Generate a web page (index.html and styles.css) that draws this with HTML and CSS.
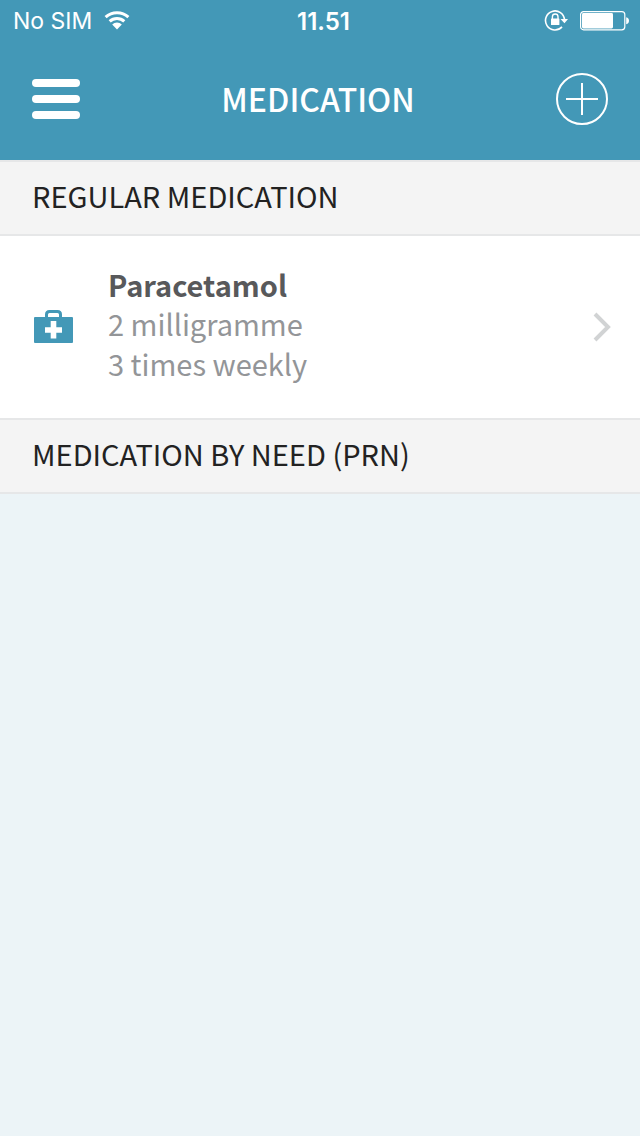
FILE: index.html
```html
<!DOCTYPE html>
<html lang="en">
<head>
<meta charset="utf-8">
<meta name="viewport" content="width=device-width, initial-scale=1">
<title>Medication</title>
<link rel="stylesheet" href="styles.css">
</head>
<body>
<header class="top">
  <div class="status">
    <div class="status-left">
      <span>No SIM</span>
      <svg width="26" height="20" viewBox="0 0 26 20" fill="none" stroke="#fff" stroke-width="3" aria-hidden="true">
        <path d="M1.6 6.2A16.5 16.5 0 0 1 24.4 6.2"/>
        <path d="M5.7 10.4A10.6 10.6 0 0 1 20.3 10.4"/>
        <path d="M13 18.4L8.2 13.6A6.8 6.8 0 0 1 17.8 13.6Z" fill="#fff" stroke="none"/>
      </svg>
    </div>
    <time class="clock">11.51</time>
    <div class="status-right">
      <svg width="24" height="22" viewBox="0 0 24 22" aria-hidden="true">
        <path d="M18 16.9A9.5 9.5 0 1 1 20.5 10" fill="none" stroke="#fff" stroke-width="1.6"/>
        <path d="M16.5 9H24L20.5 13.3Z" fill="#fff"/>
        <rect x="7" y="8.5" width="8.4" height="6.5" rx=".6" fill="#fff"/>
        <path d="M8.4 9V6.8A2.8 2.8 0 0 1 14 6.8V9" fill="none" stroke="#fff" stroke-width="1.4"/>
      </svg>
      <svg width="50" height="20" viewBox="0 0 50 20" aria-hidden="true">
        <rect x=".6" y=".6" width="44.2" height="18.2" rx="3" fill="none" stroke="#fff" stroke-width="1.2"/>
        <rect x="2" y="2" width="31" height="15.4" rx="1.4" fill="#fff"/>
        <path d="M46.2 6.2Q49 6.8 49 9.7T46.2 13.2Z" fill="#fff"/>
      </svg>
    </div>
  </div>
  <nav class="bar">
    <button class="icon-button" type="button" aria-label="Menu">
      <svg width="48" height="40" viewBox="0 0 48 40" fill="#fff" aria-hidden="true">
        <rect width="48" height="8" rx="4"/>
        <rect y="16" width="48" height="8" rx="4"/>
        <rect y="32" width="48" height="8" rx="4"/>
      </svg>
    </button>
    <h1 class="title">MEDICATION</h1>
    <button class="icon-button" type="button" aria-label="Add medication">
      <svg width="52" height="52" viewBox="0 0 52 52" fill="none" stroke="#fff" stroke-width="2" aria-hidden="true">
        <circle cx="26" cy="26" r="25"/>
        <path d="M26 10V42M10 26H42"/>
      </svg>
    </button>
  </nav>
</header>
<main>
  <section>
    <h2 class="section-title">REGULAR MEDICATION</h2>
    <a class="item" href="#paracetamol">
      <svg width="40" height="36" viewBox="0 0 40 36" aria-hidden="true">
        <path d="M12.5 9V5.5Q12.5 2.5 15.5 2.5H23.5Q26.5 2.5 26.5 5.5V9" fill="none" stroke="#4398b7" stroke-width="3"/>
        <rect y="8" width="39" height="26" rx="1" fill="#4398b7"/>
        <path d="M16.7 12H22.3V18.3H28V23.7H22.3V29.5H16.7V23.7H11V18.3H16.7Z" fill="#fff"/>
      </svg>
      <span class="details">
        <strong class="name">Paracetamol</strong>
        <span>2 milligramme</span>
        <span>3 times weekly</span>
      </span>
      <svg width="18" height="30" viewBox="0 0 18 30" fill="none" stroke="#d1d3d4" stroke-width="4" aria-hidden="true">
        <path d="M2 2L15 15L2 28"/>
      </svg>
    </a>
  </section>
  <section>
    <h2 class="section-title">MEDICATION BY NEED (PRN)</h2>
  </section>
</main>
</body>
</html>
```
FILE: styles.css
```css
* {
  box-sizing: border-box;
}

body {
  margin: 0;
  min-height: 100vh;
  background: #ecf4f7;
  font-family: "Noto Sans CJK JP", "Noto Sans", sans-serif;
  font-size: 29px;
}

.top {
  background: #4398b7;
  color: #fff;
}

.status {
  display: grid;
  grid-template-columns: 1fr auto 1fr;
  align-items: center;
  height: 40px;
  padding: 2px 10px 0 13px;
  font-family: Inter, "Liberation Sans", sans-serif;
  font-size: 23px;
}

.status-left,
.status-right {
  display: flex;
  align-items: center;
  gap: 12px;
}

.status-right {
  justify-content: flex-end;
}

.clock {
  padding-left: 4px;
  font-size: 24px;
  font-weight: 600;
}

.bar {
  display: flex;
  align-items: center;
  justify-content: space-between;
  height: 120px;
  padding: 0 32px 2px;
}

.icon-button {
  display: flex;
  padding: 0;
  border: 0;
  background: none;
}

.title {
  margin: 0;
  padding-bottom: 2px;
  font-size: 32px;
  font-weight: 500;
  line-height: 40px;
}

.section-title {
  margin: 0;
  padding: 13px 32px 19px;
  border: solid #e6e7e8;
  border-width: 2px 0;
  background: #f4f4f4;
  color: #222;
  font-size: 29px;
  font-weight: 400;
  line-height: 40px;
}

.item {
  display: flex;
  align-items: center;
  padding: 0 29px 0 34px;
  background: #fff;
  color: #939598;
  text-decoration: none;
}

.details {
  display: flex;
  flex: 1;
  flex-direction: column;
  margin-left: 34px;
  padding: 29px 0 35px;
  line-height: 40px;
}

.name {
  color: #58595b;
  font-weight: 700;
  line-height: 38px;
}
```
